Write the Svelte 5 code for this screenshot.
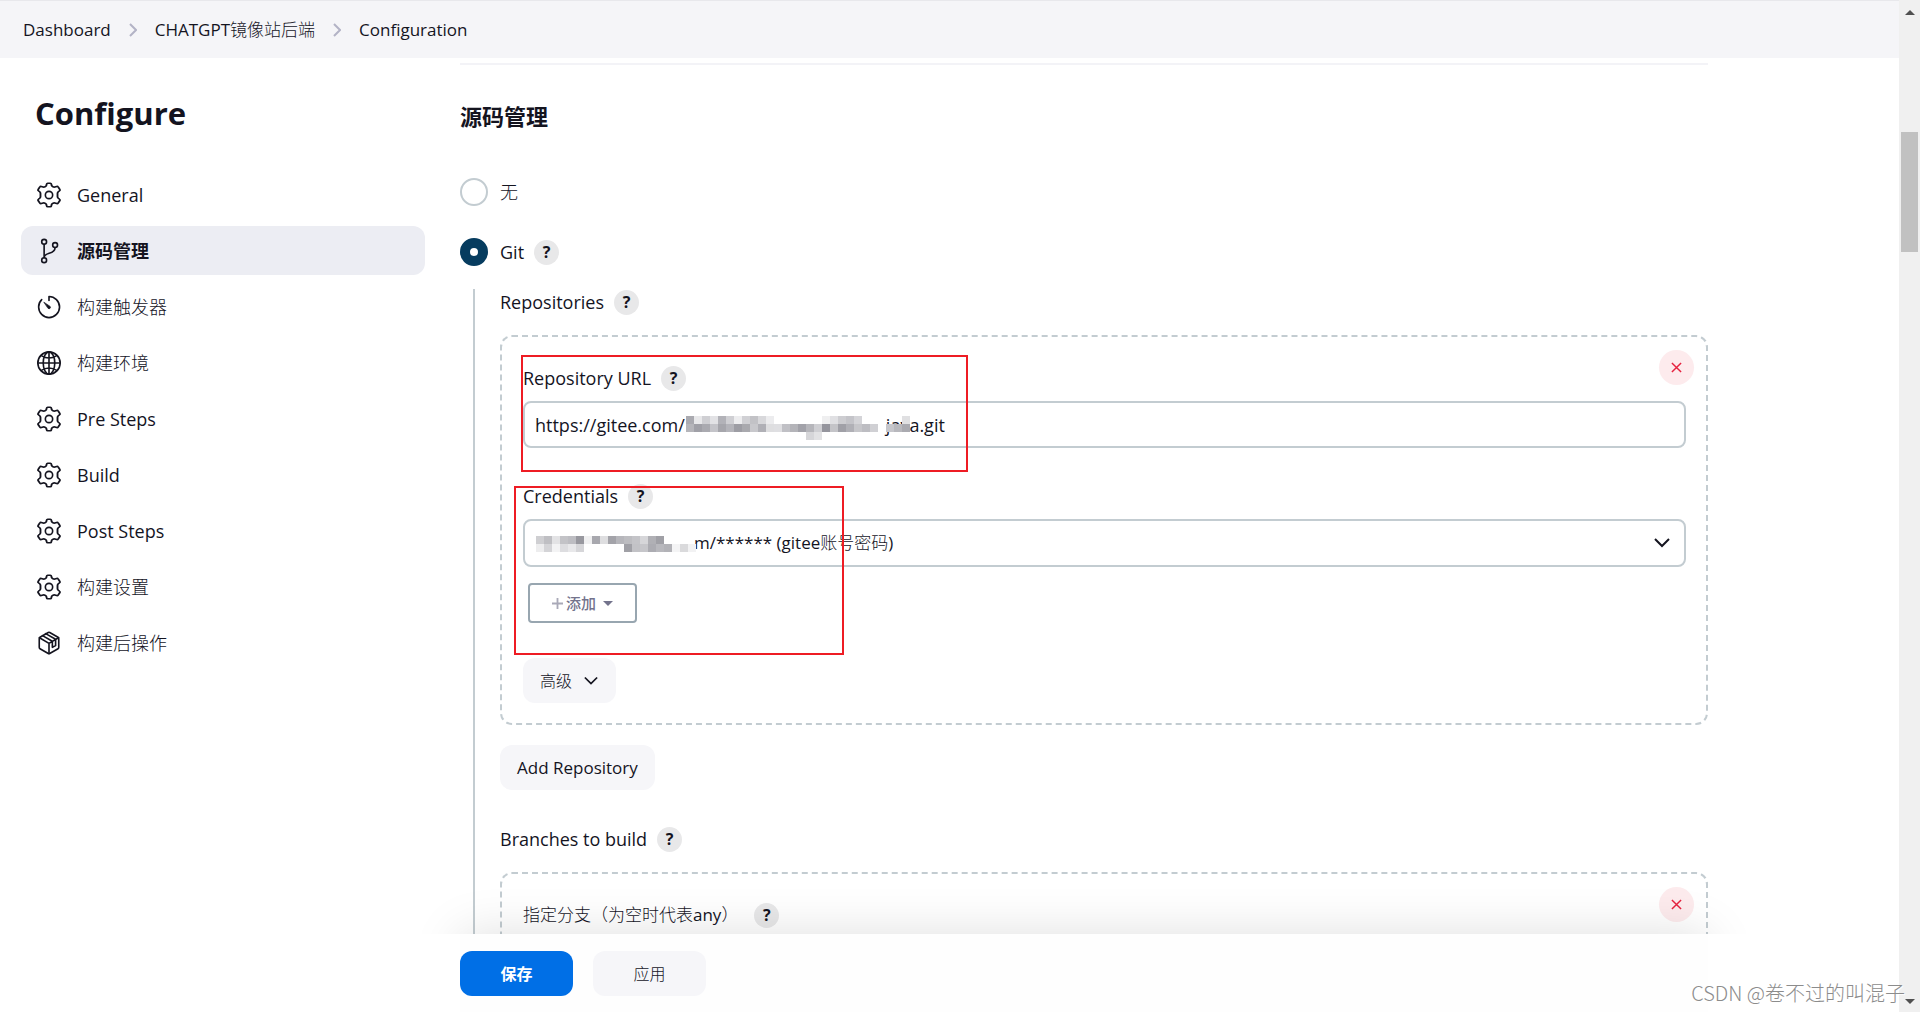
<script lang="ts">
  type Cell = [number, number, string, number?];

  const sections = [
    { label: 'General', icon: 'gear' },
    { label: '源码管理', icon: 'branch' },
    { label: '构建触发器', icon: 'timer' },
    { label: '构建环境', icon: 'globe' },
    { label: 'Pre Steps', icon: 'gear' },
    { label: 'Build', icon: 'gear' },
    { label: 'Post Steps', icon: 'gear' },
    { label: '构建设置', icon: 'gear' },
    { label: '构建后操作', icon: 'box' }
  ];

  const gap = (n: number) => '\u00a0'.repeat(n);

  let active = $state(1);
  let scm = $state('git');
  let url = $state('https://gitee.com/' + gap(43) + 'java.git');
  const credential = gap(36) + 'm/****** (gitee账号密码)';

  // [column, row, shade, width in cells]
  const urlMask: Cell[] = [
    [0, 0, '#aaaab0'], [1, 0, '#e8e8ea'], [2, 0, '#cfcfd3'], [3, 0, '#e2e2e5'], [4, 0, '#b2b2b8'], [5, 0, '#cfcfd3'], [6, 0, '#ededef'], [7, 0, '#d0d0d4'], [8, 0, '#c2c2c6'], [9, 0, '#d8d8db'],
    [10, 0, '#ececee'], [17, 0, '#efeff0'], [18, 0, '#e0e0e3'], [19, 0, '#cdcdd1'], [20, 0, '#c4c4c9'], [21, 0, '#d4d4d8'], [27, 0, '#e0e0e2'],
    [0, 1, '#b5b5ba'], [1, 1, '#a0a0a7'], [2, 1, '#aaaab0'], [3, 1, '#c4c4c9'], [4, 1, '#a6a6ac'], [5, 1, '#b4b4ba'], [6, 1, '#9d9da4'], [7, 1, '#a9a9ae'], [8, 1, '#c8c8cc'], [9, 1, '#b0b0b6'], [10, 1, '#dedee0'],
    [11, 1, '#dfdfe2'], [12, 1, '#c0c0c5'], [13, 1, '#b4b4b9'], [14, 1, '#a2a2a9'], [15, 1, '#b6b6bb'], [16, 1, '#cfcfd3'], [17, 1, '#95959d'], [18, 1, '#c4c4c8'], [19, 1, '#a0a0a7'], [20, 1, '#b0b0b6'], [21, 1, '#c6c6ca'], [22, 1, '#bdbdc2'], [23, 1, '#d0d0d4'],
    [25, 1, '#c6c6cb'], [26, 1, '#b8b8bd'], [27, 1, '#aaaab0'], [15, 2, '#d6d6d9'], [16, 2, '#e2e2e4']
  ];
  const credMask: Cell[] = [
    [0, 0, '#cfcfd2'], [1, 0, '#bfbfc3'], [2, 0, '#e3e3e5'], [3, 0, '#c3c3c7'], [4, 0, '#bdbdc2'], [5, 0, '#98989f'], [6, 0, '#f0f0f1'], [7, 0, '#a8a8ae'], [8, 0, '#dedee0'], [9, 0, '#a3a3a9'],
    [10, 0, '#b6b6bb'], [11, 0, '#bdbdc1'], [12, 0, '#c4c4c8'], [13, 0, '#d6d6d9'], [14, 0, '#b0b0b5'], [15, 0, '#a0a0a6'],
    [0, 1, '#ededee'], [1, 1, '#d4d4d7'], [2, 1, '#f3f3f4'], [3, 1, '#dddde0'], [4, 1, '#e8e8ea'], [5, 1, '#d6d6d9'], [11, 1, '#a0a0a6'], [12, 1, '#c2c2c6'], [13, 1, '#c6c6ca'], [14, 1, '#acacb2'], [15, 1, '#b8b8bd'], [16, 1, '#b2b2b7'],
    [17, 1, '#f4f4f5'], [18, 1, '#dadadc'], [19, 1, '#f2f2f3']
  ];
</script>

{#snippet icon(name: string)}
  <svg class="icon" viewBox="0 0 512 512" fill="none" stroke="currentColor" stroke-width="32" stroke-linecap="round" stroke-linejoin="round" aria-hidden="true">
    {#if name === 'gear'}
      <circle cx="256" cy="256" r="72" />
      <path d="M216 40 Q218 24 234 24 H278 Q294 24 296 40 L302 72 Q308 86 324 94 Q340 104 356 100 L388 88 Q404 82 412 96 L440 142 Q452 160 438 172 L416 192 Q402 208 402 224 V288 Q402 304 416 320 L438 340 Q452 352 440 370 L412 416 Q404 430 388 424 L356 412 Q340 408 324 418 Q308 426 302 440 L296 472 Q294 488 278 488 H234 Q218 488 216 472 L210 440 Q204 426 188 418 Q172 408 156 412 L124 424 Q108 430 100 416 L72 370 Q60 352 74 340 L96 320 Q110 304 110 288 V224 Q110 208 96 192 L74 172 Q60 160 72 142 L100 96 Q108 82 124 88 L156 100 Q172 104 188 94 Q204 86 210 72 Z" transform="translate(-38 0) scale(1.148 1)" />
    {:else if name === 'branch'}
      <circle cx="160" cy="76" r="48" /><circle cx="160" cy="436" r="48" /><circle cx="376" cy="138" r="48" />
      <path d="M160 124V388M376 186c0 154-216 80-216 204" />
    {:else if name === 'timer'}
      <path d="M112 112A204 204 0 0 0 52 256c0 113 91 208 204 208s208-95 208-208S370 48 256 48v80" />
      <path d="M160 165l118 79a28 28 0 0 1-36 42z" fill="currentColor" stroke-width="14" />
    {:else if name === 'globe'}
      <circle cx="256" cy="256" r="220" />
      <ellipse cx="256" cy="256" rx="114" ry="220" />
      <path d="M256 36V476M36 256H476M104 110c92 58 212 58 304 0M104 402c92-58 212-58 304 0" />
    {:else if name === 'box'}
      <path d="M448 342V170a28 28 0 0 0-14-26L270 48a28 28 0 0 0-28 0L78 144a28 28 0 0 0-14 26v172a28 28 0 0 0 14 26l164 96a28 28 0 0 0 28 0l164-96a28 28 0 0 0 14-26z" />
      <path d="M69 153l187 110 187-110M256 463V263M128 110l194 112v120l64-36V182L190 72" />
    {/if}
  </svg>
{/snippet}

{#snippet chevron()}
  <svg class="chevron" viewBox="0 0 16 16" fill="none" stroke="currentColor" stroke-width="2" aria-hidden="true"><path d="M1 4l7 7 7-7" /></svg>
{/snippet}

{#snippet help(topic: string)}
  <button type="button" class="help" aria-label={'Help for ' + topic}>?</button>
{/snippet}

{#snippet remove()}
  <button type="button" class="remove" aria-label="Delete">
    <svg viewBox="0 0 12 12" fill="none" stroke="currentColor" stroke-width="1.6" aria-hidden="true"><path d="M1 1l10 10M11 1L1 11" /></svg>
  </button>
{/snippet}

{#snippet mask(cells: Cell[], cls: string)}
  <svg class="mask {cls}" width="232" height="24" shape-rendering="crispEdges" aria-hidden="true">
    {#each cells as [x, y, shade, w = 1]}
      <rect x={x * 8} y={y * 8} width={w * 8} height="8" fill={shade} />
    {/each}
  </svg>
{/snippet}

<div class="window">
  <div class="page">
    <nav class="breadcrumbs" aria-label="Breadcrumb">
      <a href="#dashboard">Dashboard</a>
      <svg viewBox="0 0 8 14" aria-hidden="true"><path d="M1 1l6 6-6 6" /></svg>
      <a href="#job">CHATGPT镜像站后端</a>
      <svg viewBox="0 0 8 14" aria-hidden="true"><path d="M1 1l6 6-6 6" /></svg>
      <a href="#configuration">Configuration</a>
    </nav>

    <div class="body">
      <aside class="sidebar">
        <h1>Configure</h1>
        <nav class="tasks">
          {#each sections as section, i}
            <button type="button" class="task" class:active={i === active} onclick={() => (active = i)}>
              {@render icon(section.icon)}
              <span>{section.label}</span>
            </button>
          {/each}
        </nav>
      </aside>

      <main>
        <div class="config">
          <h2>源码管理</h2>

          <div class="radio-row">
            <input type="radio" id="scm-none" name="scm" value="none" bind:group={scm} />
            <label for="scm-none">无</label>
          </div>
          <div class="radio-row">
            <input type="radio" id="scm-git" name="scm" value="git" bind:group={scm} />
            <label for="scm-git">Git</label>
            {@render help('Git')}
          </div>

          <div class="nested">
            <div class="label-row">
              <span>Repositories</span>
              {@render help('Repositories')}
            </div>

            <div class="card">
              {@render remove()}
              <div class="label-row">
                <label for="repo-url">Repository URL</label>
                {@render help('Repository URL')}
              </div>
              <div class="field">
                <input type="text" id="repo-url" class="control" bind:value={url} />
                {@render mask(urlMask, 'mask-url')}
              </div>

              <div class="label-row">
                <label for="credentials">Credentials</label>
                {@render help('Credentials')}
              </div>
              <div class="field select-field">
                <select id="credentials" class="control">
                  <option>{credential}</option>
                </select>
                {@render chevron()}
                {@render mask(credMask, 'mask-cred')}
              </div>

              <button type="button" class="add">
                <svg class="plus" viewBox="0 0 12 12" aria-hidden="true"><path d="M6 0v12M0 6h12" /></svg>
                添加
                <span class="caret"></span>
              </button>
              <button type="button" class="soft advanced">高级 {@render chevron()}</button>

              <div class="highlight highlight-url"></div>
              <div class="highlight highlight-cred"></div>
            </div>

            <button type="button" class="soft add-repo">Add Repository</button>

            <div class="label-row">
              <span>Branches to build</span>
              {@render help('Branches to build')}
            </div>
            <div class="card">
              {@render remove()}
              <div class="label-row branch-label">
                <label for="branch">指定分支（为空时代表any）</label>
                {@render help('指定分支')}
              </div>
              <div class="field">
                <input type="text" id="branch" class="control" />
              </div>
            </div>
          </div>
        </div>

        <div class="bottom-bar">
          <button type="submit" class="soft primary">保存</button>
          <button type="button" class="soft">应用</button>
        </div>
      </main>
    </div>
  </div>

  <div class="scrollbar" aria-hidden="true">
    <span class="arrow up"></span>
    <span class="thumb"></span>
    <span class="arrow down"></span>
  </div>

  <div class="watermark">CSDN @卷不过的叫混子</div>
</div>

<style>
  :global(body) {
    margin: 0;
    background: #fff;
  }

  .window {
    position: relative;
    display: flex;
    height: 100vh;
    overflow: hidden;
    color: #14141f;
    font-family: 'Open Sans', 'Noto Sans CJK SC Light', 'Noto Sans CJK SC', sans-serif;
    font-size: 18px;
    line-height: 24px;
  }

  button,
  input,
  select {
    box-sizing: border-box;
    margin: 0;
    color: inherit;
    font: inherit;
  }

  button {
    padding: 0;
    border: none;
    cursor: pointer;
  }

  .page {
    flex: 1;
    min-width: 0;
    display: flex;
    flex-direction: column;
  }

  .breadcrumbs {
    display: flex;
    align-items: center;
    gap: 18px;
    height: 57px;
    padding-left: 23px;
    border-top: 1px solid #e8e8ec;
    background: #f5f5f8;
    font-size: 17px;
  }

  .breadcrumbs a {
    color: inherit;
    text-decoration: none;
  }

  .breadcrumbs svg {
    width: 8px;
    height: 14px;
    fill: none;
    stroke: #b3b3c6;
    stroke-width: 2;
  }

  .body {
    flex: 1;
    min-height: 0;
    display: flex;
  }

  .sidebar {
    flex: 0 0 404px;
    padding: 35px 35px 0 21px;
  }

  h1 {
    margin: 0 0 37px 14px;
    font-size: 31px;
    line-height: 40px;
    font-weight: 700;
  }

  .tasks {
    display: flex;
    flex-direction: column;
    gap: 7px;
  }

  .task {
    display: flex;
    align-items: center;
    gap: 15px;
    height: 49px;
    padding-left: 15px;
    border-radius: 12px;
    background: none;
    text-align: left;
  }

  .task.active {
    background: #ecedf3;
  }

  .task.active,
  h2,
  .soft.primary {
    font-family: 'Open Sans', 'Noto Sans CJK SC', sans-serif;
    font-weight: 700;
  }

  .icon {
    width: 26px;
    height: 26px;
  }

  main {
    flex: 1;
    min-width: 0;
    max-width: 1248px;
    display: flex;
    flex-direction: column;
  }

  .config {
    flex: 1;
    min-height: 0;
    margin-top: 5px;
    border-top: 2px solid #f3f3f7;
    overflow: hidden;
  }

  h2 {
    margin: 35px 0 46px;
    font-size: 22px;
    line-height: 32px;
  }

  .radio-row {
    display: flex;
    align-items: center;
    height: 28px;
    margin-bottom: 32px;
  }

  .radio-row input {
    appearance: none;
    width: 28px;
    height: 28px;
    margin-right: 12px;
    border: 2px solid #c3ccd1;
    border-radius: 50%;
  }

  .radio-row input:checked {
    border: 10px solid #063c5f;
  }

  .help {
    width: 25px;
    height: 25px;
    margin-left: 10px;
    border-radius: 50%;
    background: #e8e8e9;
    font-size: 16px;
    line-height: 25px;
    font-weight: 700;
  }

  .nested {
    margin: -9px 0 0 13px;
    padding-left: 25px;
    border-left: 2px solid #c3ccd1;
  }

  .label-row {
    display: flex;
    align-items: center;
    height: 26px;
  }

  .card {
    position: relative;
    margin: 20px 0;
    padding: 28px 20px 20px 21px;
    border: 2px dashed #c3ccd1;
    border-radius: 12px;
  }

  .remove {
    position: absolute;
    top: 13px;
    right: 12px;
    width: 35px;
    height: 35px;
    border-radius: 50%;
    background: #fdebed;
    color: #e6223f;
  }

  .remove svg {
    display: block;
    width: 11px;
    height: 11px;
    margin: 0 auto;
  }

  .field {
    position: relative;
    margin: 10px 0 35px;
  }

  .control {
    display: block;
    width: 100%;
    height: 47px;
    padding: 0 10px;
    border: 2px solid #c3ccd1;
    border-radius: 8px;
    background: #fff;
  }

  .select-field {
    margin-bottom: 16px;
  }

  select.control {
    appearance: none;
    height: 48px;
    font-size: 17px;
  }

  .chevron {
    width: 14px;
    height: 14px;
  }

  .select-field .chevron {
    position: absolute;
    top: 16px;
    right: 16px;
    width: 16px;
    height: 16px;
  }

  .mask {
    position: absolute;
    pointer-events: none;
  }

  .mask-url {
    top: 15px;
    left: 163px;
  }

  .mask-cred {
    top: 17px;
    left: 13px;
  }

  .add {
    display: flex;
    align-items: center;
    justify-content: center;
    gap: 3px;
    width: 109px;
    height: 40px;
    margin: 0 0 35px 5px;
    border: 2px solid #98a6b0;
    border-radius: 4px;
    background: #fff;
    color: #73738c;
    font-family: 'Noto Sans CJK SC', sans-serif;
    font-size: 15px;
    font-weight: 500;
  }

  .plus {
    width: 11px;
    height: 11px;
    stroke: #a9a9b8;
    stroke-width: 2;
  }

  .caret {
    margin-left: 4px;
    border: 5px solid transparent;
    border-top-color: #73738c;
    border-bottom: none;
  }

  .soft {
    min-width: 113px;
    height: 45px;
    padding: 0 17px;
    border-radius: 12px;
    background: #f6f6f9;
    font-size: 16px;
  }

  .advanced {
    display: flex;
    align-items: center;
    gap: 12px;
    min-width: 93px;
  }

  .add-repo {
    margin-bottom: 36px;
    font-size: 17px;
  }

  .highlight {
    position: absolute;
    box-sizing: border-box;
    border: 2px solid #ee1c24;
    pointer-events: none;
  }

  .highlight-url {
    top: 18px;
    left: 19px;
    width: 447px;
    height: 117px;
  }

  .highlight-cred {
    top: 149px;
    left: 12px;
    width: 330px;
    height: 169px;
  }

  .branch-label {
    gap: 6px;
    font-size: 17px;
  }

  .bottom-bar {
    position: relative;
    display: flex;
    align-items: flex-start;
    gap: 20px;
    height: 61px;
    padding-top: 17px;
    background: #fefefe;
  }

  /* shadow only above the bar */
  .bottom-bar::before {
    content: '';
    position: absolute;
    inset: 0;
    box-shadow: 0 0 50px rgba(0, 0, 0, 0.13);
    clip-path: inset(-60px -60px 100% -60px);
    pointer-events: none;
  }

  .soft.primary {
    background: #006fe6;
    color: #fff;
  }

  .scrollbar {
    box-sizing: border-box;
    display: flex;
    flex-direction: column;
    align-items: center;
    width: 21px;
    padding: 10px 0 8px;
    background: #f0f0f0;
  }

  .arrow {
    border: 5px solid transparent;
  }

  .up {
    border-top: none;
    border-bottom-color: #505050;
  }

  .down {
    margin-top: auto;
    border-bottom: none;
    border-top-color: #505050;
  }

  .thumb {
    width: 17px;
    height: 120px;
    margin-top: 117px;
    background: #c1c1c1;
  }

  .watermark {
    position: absolute;
    right: 15px;
    bottom: 5px;
    color: #8c8c8c;
    font-family: 'Noto Sans CJK SC', sans-serif;
    font-size: 20px;
    font-weight: 300;
    line-height: 28px;
    text-shadow: 1px 1px 1px #fff;
  }
</style>
